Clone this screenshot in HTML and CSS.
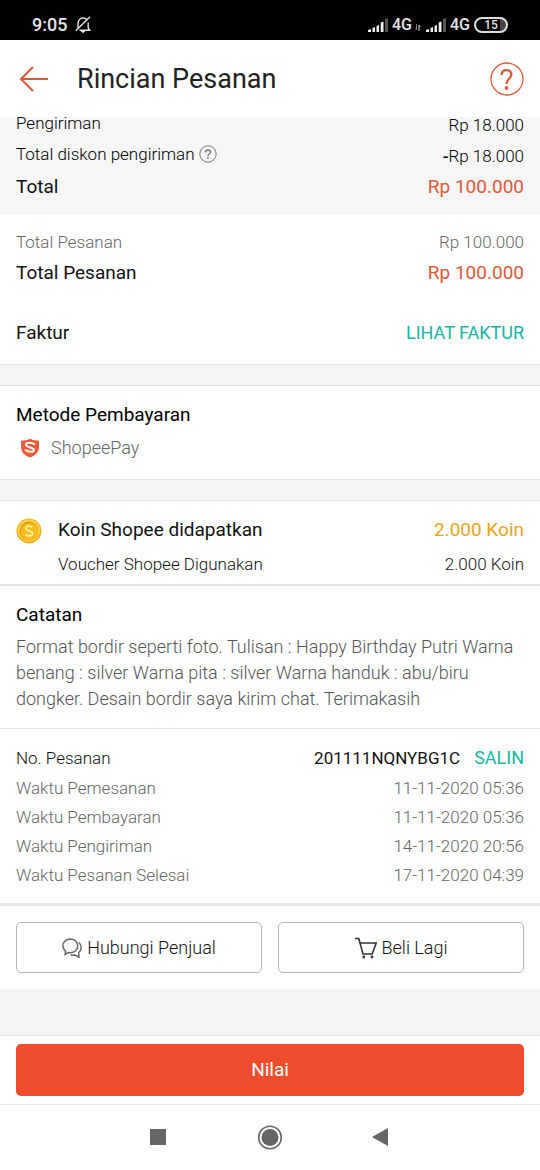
FILE: index.html
```html
<!DOCTYPE html>
<html lang="id">
<head>
<meta charset="utf-8">
<meta name="viewport" content="width=device-width, initial-scale=1">
<title>Rincian Pesanan</title>
<link rel="stylesheet" href="styles.css">
</head>
<body>
<div class="status">
  <span class="clock">9:05</span>
  <svg class="bell" width="16" height="18" viewBox="0 0 16 18" fill="none" stroke="#e6e6e6" stroke-width="1.4"><path d="M3 13V7.500C3 4.500 5 2 8 2c1.500 0 3 .6 3.800 1.800M13.200 6.500V12l1.500 2.300H4.500M15 .8L.8 14.800"/><path d="M5.500 15h5L8 17.200z" fill="#e6e6e6" stroke="none"/></svg>
  <span class="spacer"></span>
  <svg class="signal" width="20" height="14" viewBox="0 0 20 14" fill="#eee"><path d="M0 14v-2l3-1v3zM4.500 14v-4l2.500-1v5zM8.500 14V8l2.500-1v7zM12.700 14V4.500l2.800-1V14z"/><path d="M17 14V1l3-1v14z" fill="#555"/></svg>
  <span class="net">4G</span>
  <svg class="updown" width="6" height="7" viewBox="0 0 6 7" fill="none"><path d="M1.500 0v6L0 4.500" stroke="#777"/><path d="M4 7V1l1.500 1.500" stroke="#ddd"/></svg>
  <svg class="signal" width="20" height="14" viewBox="0 0 20 14" fill="#eee"><path d="M0 14v-2l3-1v3zM4.500 14v-4l2.500-1v5zM8.500 14V8l2.500-1v7zM12.700 14V4.500l2.800-1V14z"/><path d="M17 14V1l3-1v14z" fill="#555"/></svg>
  <span class="net">4G</span>
  <span class="battery">15</span>
</div>

<header class="header">
  <button class="icon-button" aria-label="Kembali"><svg width="30" height="26" viewBox="0 0 30 26" fill="none" stroke="#e2583a" stroke-width="2"><path d="M29 13H2M14 1L2 13l12 12"/></svg></button>
  <h1 class="title">Rincian Pesanan</h1>
  <button class="icon-button" aria-label="Bantuan"><svg width="34" height="34" viewBox="0 0 34 34" fill="none" stroke="#e2583a"><circle cx="17" cy="17" r="16" stroke-width="1.300"/><path d="M11.700 13c0-3 2-4.800 4.800-4.800 3 0 4.900 1.700 4.900 4.400 0 2-1.100 3-2.500 4.400-1.500 1.400-2.300 2.200-2.300 5" stroke-width="2.300"/><circle cx="16.500" cy="26" r="1.900" fill="#e2583a" stroke="none"/></svg></button>
</header>

<main class="main">
  <section class="summary">
    <div class="row shipping"><span>Pengiriman</span><span class="amount">Rp 18.000</span></div>
    <div class="row shipping"><span class="with-help">Total diskon pengiriman
      <svg width="18" height="18" viewBox="0 0 18 18" fill="none" stroke="#777"><circle cx="9" cy="9" r="8.200"/><path d="M6.500 7.500C6.500 5.900 7.500 5 9 5s2.500.8 2.500 2.200C11.500 8.700 9 9 9 11" stroke-width="1.300"/><circle cx="9" cy="13" r=".9" fill="#777" stroke="none"/></svg></span><span class="amount"><span class="minus">-</span>Rp 18.000</span></div>
    <div class="row strong total"><span>Total</span><span class="price">Rp 100.000</span></div>
  </section>

  <section class="order-total">
    <div class="row muted"><span>Total Pesanan</span><span>Rp 100.000</span></div>
    <div class="row strong"><span>Total Pesanan</span><span class="price">Rp 100.000</span></div>
    <div class="row strong invoice"><span>Faktur</span><a class="link" href="#faktur">LIHAT FAKTUR</a></div>
  </section>

  <section class="payment">
    <h2 class="heading">Metode Pembayaran</h2>
    <div class="method muted">
      <svg width="20" height="20" viewBox="0 0 20 20"><path d="M10 .8C7 2.300 4 2.700 1 2.700V9c0 5 3.500 8.500 9 10.500 5.500-2 9-5.500 9-10.500V2.700C16 2.700 13 2.300 10 .8z" fill="#ec5b36"/><path d="M15 6.500C11.500 4 6 4.200 6 6.800c0 2.800 8 2.500 8 5.200 0 2.600-5.500 2.300-9-.3" fill="none" stroke="#fff" stroke-width="2"/></svg>
      <span>ShopeePay</span>
    </div>
  </section>

  <section class="coins">
    <svg class="coin" width="26" height="26" viewBox="0 0 26 26"><circle cx="13" cy="13" r="12.500" fill="#eeb01f"/><circle cx="13" cy="12.500" r="11" fill="#ffd64d"/><circle cx="13" cy="13" r="9.500" fill="#d99713"/><circle cx="13.500" cy="13.500" r="8.700" fill="#f4bb22"/><path d="M16.300 9.300C13.500 7.200 9.900 7.900 9.900 10.300c0 3 6.600 2.200 6.600 5.300 0 2.600-4 3.200-7 .9" fill="none" stroke="#fff1a0" stroke-width="1.700"/></svg>
    <div class="coin-rows">
      <div class="row strong"><span>Koin Shopee didapatkan</span><span class="gold">2.000 Koin</span></div>
      <div class="row"><span>Voucher Shopee Digunakan</span><span>2.000 Koin</span></div>
    </div>
  </section>

  <section class="note">
    <h2 class="heading">Catatan</h2>
    <p class="note-text">Format bordir seperti foto. Tulisan : Happy Birthday Putri Warna benang : silver Warna pita : silver Warna handuk : abu/biru dongker. Desain bordir saya kirim chat. Terimakasih</p>
  </section>

  <section class="details">
    <div class="row number"><span>No. Pesanan</span><span class="copy"><span class="order-id">201111NQNYBG1C</span><button class="link copy-button">SALIN</button></span></div>
    <div class="row muted"><span>Waktu Pemesanan</span><span>11-11-2020 05:36</span></div>
    <div class="row muted"><span>Waktu Pembayaran</span><span>11-11-2020 05:36</span></div>
    <div class="row muted"><span>Waktu Pengiriman</span><span>14-11-2020 20:56</span></div>
    <div class="row muted"><span>Waktu Pesanan Selesai</span><span>17-11-2020 04:39</span></div>
  </section>

  <div class="actions">
    <button class="outline"><svg width="20" height="20" viewBox="0 0 20 20" fill="none" stroke="#666" stroke-width="1.500"><path d="M3.200 16.500l.3-3.400C1.800 11.700.9 10 .9 8 .9 4.200 4 1 8.300 1s7.400 3.100 7.400 6.900-3.100 6.900-7.400 6.900c-.8 0-1.500-.1-2.200-.3z"/><path d="M16.800 4.500c1.500 1.200 2.400 3 2.400 5 0 2-.9 3.700-2.500 5l.2 4.700-3.900-2.100c-1.500.3-3 .2-4.300-.4"/></svg>Hubungi Penjual</button>
    <button class="outline"><svg width="22" height="22" viewBox="0 0 22 22" fill="none" stroke="#333" stroke-width="1.600"><path d="M0 1.500h3.800L8 17h9.200l4-11H5"/><circle cx="8.800" cy="20" r="1.400" fill="#333" stroke="none"/><circle cx="17" cy="20" r="1.400" fill="#333" stroke="none"/></svg>Beli Lagi</button>
  </div>
</main>

<footer class="footer"><button class="primary">Nilai</button></footer>
<nav class="system">
  <button class="icon-button" aria-label="Aplikasi terbaru"><svg width="26" height="26" viewBox="0 0 26 26"><path d="M5 4h16v16H5z" fill="#666"/></svg></button>
  <button class="icon-button" aria-label="Beranda"><svg width="26" height="26" viewBox="0 0 26 26"><circle cx="13" cy="12.500" r="11.300" fill="none" stroke="#666" stroke-width="1.600"/><circle cx="13" cy="12.500" r="8.500" fill="#666"/></svg></button>
  <button class="icon-button" aria-label="Kembali"><svg width="26" height="26" viewBox="0 0 26 26"><path d="M19 3v18L3 12z" fill="#666"/></svg></button>
</nav>
</body>
</html>
```

FILE: styles.css
```css
* { box-sizing: border-box; }

body {
  margin: 0;
  min-height: 100vh;
  display: flex;
  flex-direction: column;
  background: #f5f5f5;
  color: #111;
  font: 300 17px/24px Roboto, sans-serif;
}

button {
  margin: 0;
  padding: 0;
  border: 0;
  background: none;
  color: inherit;
  font: inherit;
}

svg { display: block; flex: none; }
section { background: #fff; padding: 17px 16px; }

.status {
  display: flex;
  align-items: center;
  height: 40px;
  padding: 9px 32px 0;
  background: #000;
  color: #e6e6e6;
  font-weight: 500;
}
.clock { font-size: 18px; }
.bell { margin-left: 8px; }
.spacer { flex: 1; }
.net { margin-left: 4px; font-size: 16px; }
.updown { margin: 6px 5px 0 3px; }
.battery {
  width: 34px;
  height: 16px;
  margin-left: 4px;
  border: 2px solid #ddd;
  border-radius: 8px;
  background: linear-gradient(90deg, #000 80%, #444 80%);
  font-size: 12px;
  line-height: 12px;
  text-align: center;
}

.header {
  position: sticky;
  top: 0;
  z-index: 1;
  display: flex;
  align-items: center;
  height: 77px;
  padding: 0 16px 0 19px;
  background: #fff;
}
.title {
  flex: 1;
  margin: 0 0 0 28px;
  color: #222;
  font-size: 27px;
  font-weight: 400;
  line-height: 32px;
}

.main { flex: 1; }
.row { display: flex; justify-content: space-between; }
.strong { font-size: 19px; font-weight: 400; }
.muted { color: #666; }
.price { color: #e2583a; }
.gold { color: #eda51a; }
.link { color: #14b8a2; font-size: 18px; font-weight: 400; text-decoration: none; }
.heading { margin: 0; color: #000; font-size: 19px; font-weight: 400; line-height: 24px; }

.summary {
  margin-top: -6px;
  padding: 0 16px 16px;
  background: #f6f6f6;
}
.shipping { margin-bottom: 3px; color: #000; }
.amount { line-height: 28px; }
.minus { font-weight: 500; }
.with-help { display: flex; align-items: center; gap: 4px; height: 24px; }
.total { padding-top: 2px; }

.order-total { padding: 15px 16px 19px; border-bottom: 1px solid #e4e4e4; }
.order-total .strong { margin-top: 7px; }
.order-total .invoice { margin-top: 36px; }

.payment {
  margin: 20px 0;
  padding-bottom: 19px;
  border: solid #e4e4e4;
  border-width: 1px 0;
}
.method {
  display: flex;
  align-items: center;
  gap: 11px;
  margin-top: 9px;
  padding-left: 4px;
  font-size: 18px;
}

.coins {
  display: flex;
  gap: 16px;
  padding-bottom: 8px;
  border: solid #e4e4e4;
  border-width: 1px 0 2px;
}
.coin-rows { display: grid; flex: 1; gap: 10px; }

.note { padding-bottom: 16px; border-bottom: 1px solid #e4e4e4; }
.note-text { margin: 7px 0 0; color: #555; font-size: 18px; line-height: 26px; }

.details { display: grid; gap: 5px; padding-bottom: 16px; border-bottom: 3px solid #e8e8e8; }
.number { height: 25px; color: #111; }
.copy { display: flex; gap: 14px; }
.copy-button { height: 24px; }
.order-id { font-weight: 400; }

.actions {
  display: grid;
  grid-template-columns: 1fr 1fr;
  gap: 16px;
  padding: 16px;
  background: #fff;
}
.outline {
  display: flex;
  align-items: center;
  justify-content: center;
  gap: 5px;
  height: 51px;
  border: 1px solid #b5b5b5;
  border-radius: 5px;
  font-size: 18px;
}

.footer {
  padding: 8px 16px;
  border-top: 1px solid #e4e4e4;
  border-bottom: 1px solid #e8e8e8;
  background: #fff;
}
.primary {
  display: block;
  width: 100%;
  height: 52px;
  border-radius: 5px;
  background: #ee4d2d;
  color: #fff;
  font-size: 19px;
  font-weight: 400;
}

.system {
  display: flex;
  align-items: center;
  justify-content: center;
  gap: 86px;
  height: 65px;
  background: #fff;
}
```
